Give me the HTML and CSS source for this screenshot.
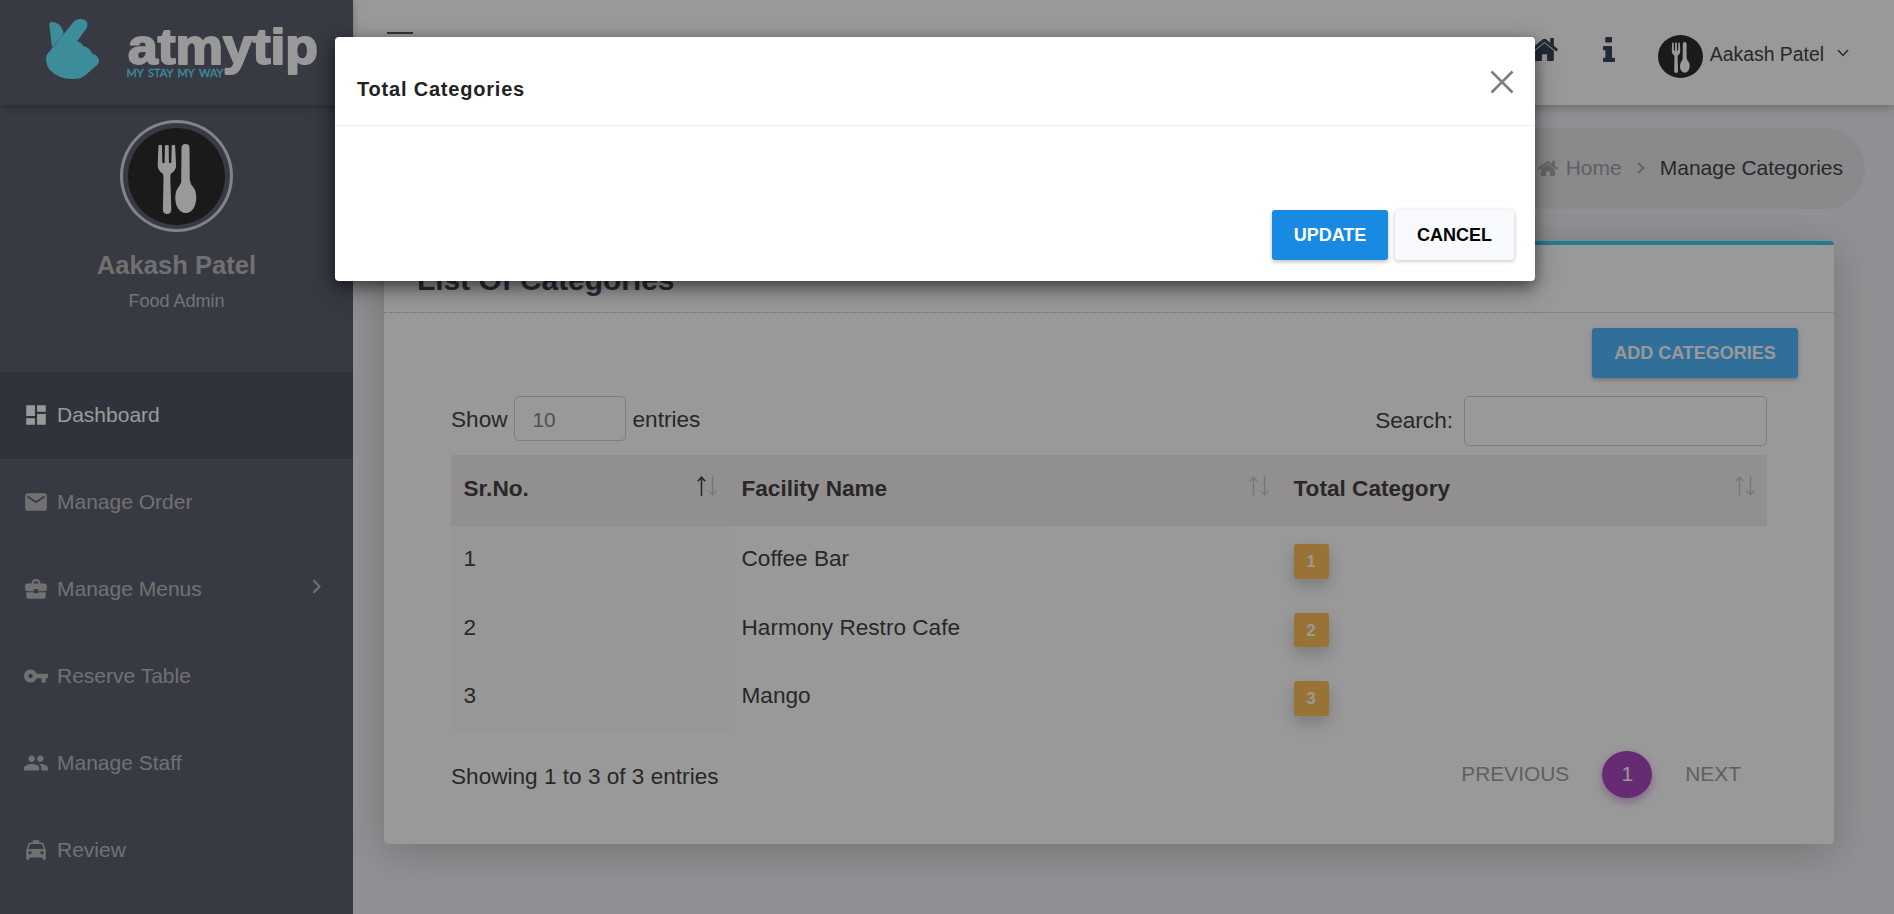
FILE: index.html
```html
<!DOCTYPE html>
<html lang="en">
<head>
<meta charset="utf-8">
<title>Manage Categories</title>
<link rel="stylesheet" href="styles.css">
</head>
<body>
<svg class="defs" width="0" height="0" aria-hidden="true">
  <symbol id="cutlery" viewBox="0 0 97 97">
    <circle cx="48.500" cy="48.500" r="48.500" fill="#2c2c2c"/>
    <g fill="#fff">
      <path d="M30.500 17.500q1.700-1.500 3.400 0l.4 17q1.200 1.500 2.400 0l.2-17q1.900-1 3.800 0l.2 17q1.200 1.500 2.400 0l.4-17q1.700-1.500 3.400 0l1 20q0 5-5.500 8.500l-.3 4 1 32q-.3 4-4.200 4t-4.200-4l.6-32-.3-4q-5.500-3.500-5.500-8.500z"/>
      <path d="M53.500 20q0-4 4-4t4 4l.3 32q.5 4 3.300 7t3.200 10c0 9-4 16-10.500 16s-10.500-7-10.500-15q0-7 3.200-11t2.700-7z"/>
    </g>
  </symbol>
  <symbol id="home" viewBox="0 0 26 23">
    <path d="M13 5.800 4 13.200V22q0 1 1 1h5.500v-6.500h5V23H21q1 0 1-1v-8.800z"/>
    <path d="M25.600 11.300 22 8.300V1h-3.500v4.500L14.600 2.200q-1.600-1.300-3.200 0L.4 11.300q-.5.500-.1 1l1 1.200q.5.400 1 0L13 4.700l10.700 8.800q.5.400 1 0l1-1.200q.4-.5-.1-1z"/>
  </symbol>
</svg>

<div class="app">
  <aside class="sidebar">
    <div class="brand">
      <svg class="brand-logo" width="300" height="80" viewBox="36 8 300 80">
        <g fill="#67e9ff">
          <path d="M49.300 24q.2-1.800 2.200-2Q60 22 63.300 31q.8 2.500-.8 4.500L52 47.500z"/>
          <path d="M47 54.500 73.500 22q3-3.500 8-3 8 1.500 5.500 8.500L77 41.500q4 0 6 4.500 7 1.500 9 7.500 7 2 7 7.500-.5 3-2.500 4.500L85 75.500q-4 3.500-12 3.500-15 0-23.500-9.500-3.500-5-3.500-10 0-3 1-5z"/>
        </g>
        <text class="brand-name" x="128" y="64" textLength="190" lengthAdjust="spacingAndGlyphs">atmytip</text>
        <text class="brand-tag" x="126.500" y="77" textLength="97" lengthAdjust="spacingAndGlyphs">MY STAY MY WAY</text>
      </svg>
    </div>
    <div class="profile">
      <div class="profile-ring"><svg width="97" height="97"><use href="#cutlery"/></svg></div>
      <div class="profile-name">Aakash Patel</div>
      <div class="profile-role">Food Admin</div>
    </div>
    <nav class="menu">
      <a class="menu-item active"><svg viewBox="0 0 24 24"><path d="M3 13h8V3H3v10zm0 8h8v-6H3v6zm10 0h8V11h-8v10zm0-18v6h8V3h-8z"/></svg><span>Dashboard</span></a>
      <a class="menu-item"><svg viewBox="0 0 24 24"><path d="M20 4H4c-1.100 0-2 .9-2 2v12c0 1.100.9 2 2 2h16c1.100 0 2-.9 2-2V6c0-1.100-.9-2-2-2zm0 4-8 5-8-5V6l8 5 8-5v2z"/></svg><span>Manage Order</span></a>
      <a class="menu-item"><svg viewBox="0 0 24 24"><path d="M10 16v-1H3.010L3 19c0 1.110.89 2 2 2h14c1.110 0 2-.89 2-2v-4h-7v1h-4zm10-9h-4.010V5l-2-2h-4l-2 2v2H4c-1.100 0-2 .9-2 2v3c0 1.110.89 2 2 2h6v-2h4v2h6c1.100 0 2-.9 2-2V9c0-1.100-.9-2-2-2zm-6 0h-4V5h4v2z"/></svg><span>Manage Menus</span>
        <svg class="caret" viewBox="0 0 9 15"><path d="m1.500 1.200 6 6.300-6 6.300"/></svg></a>
      <a class="menu-item"><svg viewBox="0 0 24 24"><path d="M12.650 10C11.830 7.670 9.610 6 7 6c-3.310 0-6 2.690-6 6s2.690 6 6 6c2.610 0 4.830-1.670 5.650-4H17v4h4v-4h2v-4H12.650zM7 14c-1.100 0-2-.9-2-2s.9-2 2-2 2 .9 2 2-.9 2-2 2z"/></svg><span>Reserve Table</span></a>
      <a class="menu-item"><svg viewBox="0 0 24 24"><path d="M16 11c1.660 0 2.990-1.340 2.990-3S17.660 5 16 5s-3 1.340-3 3 1.340 3 3 3zm-8 0c1.660 0 2.990-1.340 2.990-3S9.660 5 8 5 5 6.340 5 8s1.340 3 3 3zm0 2c-2.330 0-7 1.170-7 3.500V19h14v-2.500c0-2.330-4.670-3.500-7-3.500zm8 0c-.29 0-.62.020-.97.050 1.160.84 1.970 1.970 1.970 3.450V19h6v-2.500c0-2.330-4.670-3.500-7-3.500z"/></svg><span>Manage Staff</span></a>
      <a class="menu-item"><svg viewBox="0 0 24 24"><path d="M18.920 6.010C18.720 5.420 18.160 5 17.500 5H15V3H9v2H6.500c-.66 0-1.210.42-1.420 1.010L3 12v8c0 .55.450 1 1 1h1c.55 0 1-.45 1-1v-1h12v1c0 .55.450 1 1 1h1c.55 0 1-.45 1-1v-8l-2.080-5.990zM6.500 16c-.83 0-1.500-.67-1.500-1.500S5.670 13 6.500 13s1.500.67 1.500 1.500S7.330 16 6.500 16zm11 0c-.83 0-1.500-.67-1.500-1.500s.67-1.500 1.500-1.500 1.500.67 1.500 1.500-.67 1.500-1.500 1.500zM5 11l1.500-4.500h11L19 11H5z"/></svg><span>Review</span></a>
    </nav>
  </aside>

  <div class="main">
    <header class="topbar">
      <div class="burger"><i></i><i></i><i></i></div>
      <div class="top-actions">
        <svg class="top-home" width="27" height="24"><use href="#home"/></svg>
        <svg class="top-info" width="12" height="25" viewBox="0 0 12 25"><path d="M3 0h5.200q.8 0 .8.800v3.900q0 .8-.8.800H3q-.8 0-.8-.8V.8Q2.200 0 3 0zM.8 9h7.400q.8 0 .8.800v11h2.200q.8 0 .8.800v2.600q0 .8-.8.800H.8q-.8 0-.8-.8v-2.600q0-.8.800-.8h1.600v-7.600H.8q-.8 0-.8-.8V9.800Q0 9 .8 9z"/></svg>
        <svg class="top-avatar" width="45" height="43" viewBox="0 0 97 97" preserveAspectRatio="none"><use href="#cutlery" width="97" height="97"/></svg>
        <span class="top-user">Aakash Patel</span>
        <svg class="top-caret" width="12" height="8" viewBox="0 0 12 8"><path d="m1 1 5 5.500L11 1"/></svg>
      </div>
    </header>

    <div class="breadcrumb">
      <svg width="20" height="16" viewBox="0 0 26 23" preserveAspectRatio="none"><use href="#home" width="26" height="23"/></svg>
      <span class="crumb-link">Home</span>
      <svg class="crumb-sep" width="8" height="12" viewBox="0 0 8 12"><path d="m1 .8 5.500 5.200L1 11.200"/></svg>
      <span class="crumb-current">Manage Categories</span>
    </div>

    <section class="card">
      <div class="card-head">List Of Categories</div>
      <div class="card-actions"><button class="btn btn-add">ADD CATEGORIES</button></div>
      <div class="table-area">
        <div class="controls">
          <div class="length">Show <span class="select">10</span> entries</div>
          <div class="search">Search: <input class="search-input" type="text" aria-label="Search"></div>
        </div>
        <div class="grid head">
          <div>Sr.No.<svg class="sort asc" width="20" height="20"><path class="up" d="M4.500 20V2M.8 5.200 4.500 1.200l3.700 4"/><path d="M15.500 0v18m-3.700-3.200 3.700 4 3.700-4"/></svg></div>
          <div>Facility Name<svg class="sort" width="20" height="20"><path class="up" d="M4.500 20V2M.8 5.200 4.500 1.200l3.700 4"/><path d="M15.500 0v18m-3.700-3.200 3.700 4 3.700-4"/></svg></div>
          <div>Total Category<svg class="sort" width="20" height="20"><path class="up" d="M4.500 20V2M.8 5.200 4.500 1.200l3.700 4"/><path d="M15.500 0v18m-3.700-3.200 3.700 4 3.700-4"/></svg></div>
        </div>
        <div class="grid row"><div>1</div><div>Coffee Bar</div><div><b class="badge">1</b></div></div>
        <div class="grid row"><div>2</div><div>Harmony Restro Cafe</div><div><b class="badge">2</b></div></div>
        <div class="grid row"><div>3</div><div>Mango</div><div><b class="badge">3</b></div></div>
        <div class="foot">
          <span>Showing 1 to 3 of 3 entries</span>
          <div class="pager"><span>PREVIOUS</span><b class="page">1</b><span>NEXT</span></div>
        </div>
      </div>
    </section>
  </div>
</div>

<div class="backdrop">
  <div class="modal">
    <div class="modal-head">
      <span>Total Categories</span>
      <svg width="24" height="24" viewBox="0 0 24 24"><path d="M1.500 1.500l21 21m0-21l-21 21"/></svg>
    </div>
    <div class="modal-foot">
      <button class="btn btn-update">UPDATE</button>
      <button class="btn btn-cancel">CANCEL</button>
    </div>
  </div>
</div>
</body>
</html>
```
FILE: styles.css
```css
* { box-sizing: border-box; }
body {
  margin: 0;
  width: 1894px;
  height: 914px;
  overflow: hidden;
  position: relative;
  font-family: "Liberation Sans", Arial, sans-serif;
  color: #444;
}
.defs { position: absolute; }
.app { display: flex; height: 914px; background: #eef1f5; }

/* Sidebar */
.sidebar { width: 353px; flex: none; background: #5d6170; color: #bdbdbd; position: relative; z-index: 1; }
.brand { height: 105px; padding: 8px 0 0 36px; box-shadow: 0 2px 8px rgba(0, 0, 0, .25); }
.brand-logo { display: block; overflow: visible; }
.brand-name { font: 700 50px "Liberation Sans", Arial, sans-serif; fill: #fff; stroke: #fff; stroke-width: 2; stroke-linejoin: round; }
.brand-tag { font: 400 11.500px Lato, sans-serif; word-spacing: 2px; fill: #67e9ff; stroke: #67e9ff; stroke-width: .3; }
.profile { height: 267px; padding-top: 15px; display: flex; flex-direction: column; align-items: center; }
.profile-ring { width: 113px; height: 112px; border: 3px solid #dcdce0; border-radius: 50%; display: flex; align-items: center; justify-content: center; }
.profile-name { margin-top: 17px; font-size: 25.600px; line-height: 32px; font-weight: 700; color: #bbb; }
.profile-role { margin-top: 9px; font-size: 18px; line-height: 22px; color: #c0c0c0; }
.menu-item { height: 87px; display: flex; align-items: center; padding: 0 32px 2px 23px; font-size: 21px; }
.menu-item > svg { width: 26px; height: 26px; fill: currentColor; margin-right: 8px; }
.menu-item span { flex: 1; }
.menu-item.active { background: #515464; color: #fff; }
.menu-item .caret { width: 9px; height: 15px; margin: -4px 0 0; fill: none; stroke: currentColor; stroke-width: 2; }

/* Top bar */
.main { flex: 1; display: flex; flex-direction: column; }
.topbar { height: 105px; flex: none; background: #fff; display: flex; justify-content: space-between; padding: 32px 45px 0 34px; box-shadow: 0 2px 10px rgba(0, 0, 0, .3); }
.burger { display: flex; flex-direction: column; gap: 6px; }
.burger i { width: 26px; height: 2px; background: #555; }
.top-actions { display: flex; align-items: flex-start; }
.top-home { margin: 5px 45px 0 0; fill: #3c4659; }
.top-info { margin: 5px 43px 0 0; fill: #3c4659; }
.top-avatar { margin: 3px 7px 0 0; }
.top-user { font-size: 19.400px; line-height: 22px; margin: 11px 13px 0 0; }
.top-caret { margin-top: 17px; fill: none; stroke: #444; stroke-width: 1.500; }

/* Breadcrumb */
.breadcrumb { align-self: flex-end; width: 400px; height: 81px; margin: 23px 29px 0 0; padding: 0 22px 2px 0; border-radius: 41px; background: #e6e6e9; display: flex; align-items: center; justify-content: flex-end; font-size: 21px; line-height: 24px; }
.breadcrumb svg { fill: #aaa; margin-right: 8px; }
.crumb-link { color: #a0a0a0; margin-right: 15px; }
.breadcrumb .crumb-sep { fill: none; stroke: #a0a0a0; stroke-width: 1.800; margin-right: 15px; }

/* Card */
.card { margin: 32px 60px 0 31px; height: 603px; background: #fff; border-top: 4px solid #38cff0; border-radius: 4px; box-shadow: 0 8px 40px rgba(0, 0, 0, .2); }
.card-head { height: 68px; padding: 18px 33px 0; border-bottom: 1px dotted #bbb; font-size: 29.900px; line-height: 34px; font-weight: 700; color: #434a5d; }
.card-actions { display: flex; justify-content: flex-end; padding: 15px 36px 0 0; }
.btn { height: 50px; border: 0; border-radius: 3px; padding: 0; font: 700 18px "Liberation Sans", Arial, sans-serif; box-shadow: 0 2px 4px rgba(0, 0, 0, .25); }
.btn-add { width: 206px; background: #50b9ff; color: #fff; }
.table-area { padding: 18px 67px 0; font-size: 22.600px; }
.controls { display: flex; justify-content: space-between; height: 59px; }
.length { display: flex; align-items: center; height: 47px; gap: 7px; line-height: 26px; }
.length, .search { white-space: nowrap; }
.select { width: 112px; height: 45px; margin: -2px 0 0 -1px; border: 1px solid #d2d2d2; border-radius: 5px; padding: 3px 18px 0; display: flex; align-items: center; font-size: 20.800px; color: #888; }
.search { display: flex; align-items: center; height: 50px; gap: 11px; padding-bottom: 0; }
.search-input { width: 303px; height: 50px; border: 1px solid #d2d2d2; border-radius: 5px; background: #fff; }
.grid { display: grid; grid-template-columns: 278px 552px 486px; }
.head { height: 71px; background: #f4eff0; border-bottom: 3px solid #ebf1f6; font-weight: 700; }
.head > div { display: flex; justify-content: space-between; padding: 21px 12px 0 12.500px; line-height: 26px; }
.sort { fill: none; stroke: #c9c6c7; stroke-width: 1.400; }
.asc .up { stroke: #444; stroke-width: 1.600; }
.row { height: 68.500px; line-height: 26px; }
.row > div { padding: 20px 12px 0 12.500px; }
.row > div:first-child { background: #f9fefb; }
.badge { display: flex; align-items: center; justify-content: center; width: 35px; height: 34.500px; margin: -2px 0 0; border-radius: 3px; background: #ffbf5b; color: #fff; font-size: 16.500px; box-shadow: 0 7px 16px rgba(0, 0, 0, .2); }
.foot { display: flex; justify-content: space-between; padding: 19px 26px 0 0; }
.foot > span { line-height: 26px; margin-top: 13px; }
.pager { display: flex; align-items: center; height: 47px; color: #a0a0a0; font-size: 20.900px; }
.pager span { margin-top: -1px; }
.page { width: 50px; height: 47px; margin: 0 33px; border-radius: 50%; background: #ab49bf; color: #fff; display: flex; align-items: center; justify-content: center; font-weight: 400; box-shadow: 0 4px 8px rgba(156, 39, 176, .4); }

/* Modal */
.backdrop { position: absolute; inset: 0; z-index: 5; background: rgba(0, 0, 0, .4); }
.modal { width: 1200px; height: 244px; margin: 37px 0 0 335px; background: #fff; border-radius: 4px; box-shadow: 0 5px 15px rgba(0, 0, 0, .5), 0 10px 30px rgba(0, 0, 0, .2); }
.modal-head { height: 89px; border-bottom: 1px solid #eee; display: flex; justify-content: space-between; align-items: flex-start; padding: 33px 21px 0 22px; }
.modal-head span { font-size: 20px; line-height: 38px; font-weight: 700; color: #222; letter-spacing: .8px; }
.modal-head svg { fill: none; stroke: #7d7d7d; stroke-width: 2.600; }
.modal-foot { display: flex; justify-content: flex-end; gap: 7px; padding: 84px 21px 0 0; }
.btn-update { width: 116px; background: #188ae2; color: #fff; }
.btn-cancel { width: 119px; background: #f8f9fc; color: #000; box-shadow: 0 1px 4px rgba(0, 0, 0, .25); }
```
